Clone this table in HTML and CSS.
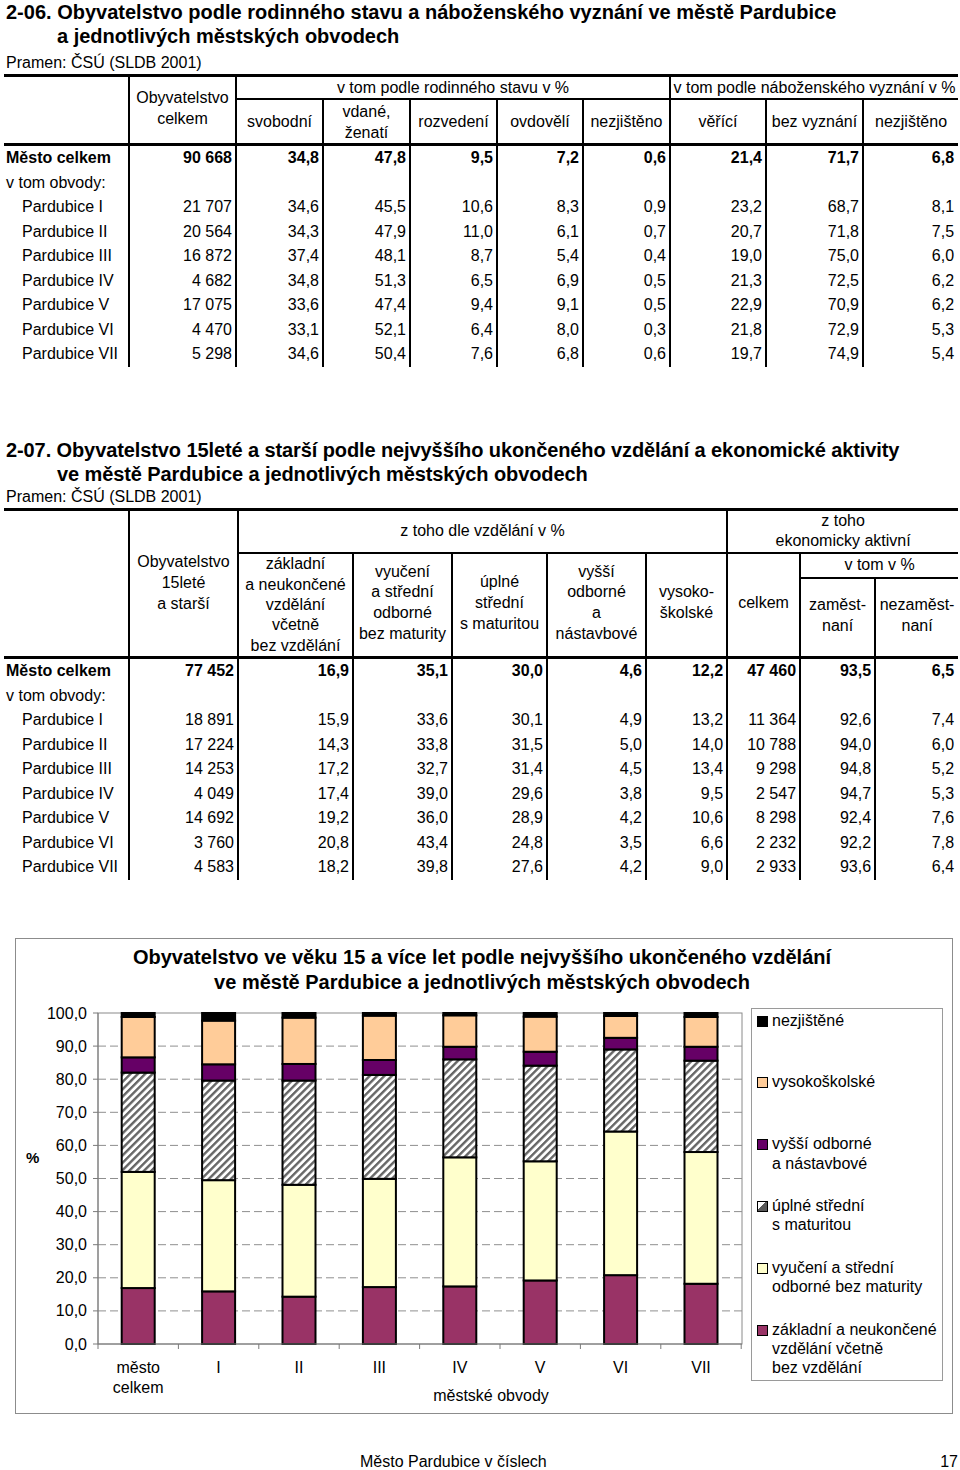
FILE: index.html
```html
<!DOCTYPE html>
<html lang="cs">
<head>
<meta charset="utf-8">
<title>Město Pardubice v číslech</title>
<link rel="stylesheet" href="styles.css">
</head>
<body>
<div class="page">

<section class="sec sec1">
  <h1 class="title">2-06. Obyvatelstvo podle rodinného stavu a náboženského vyznání ve městě Pardubice<br>a jednotlivých městských obvodech</h1>
  <p class="src">Pramen: ČSÚ (SLDB 2001)</p>
  <table class="t t1">
    <colgroup><col><col><col><col><col><col><col><col><col><col></colgroup>
    <thead>
      <tr class="r23">
        <th rowspan="2" class="bb3"></th>
        <th rowspan="2" class="vl bb3 lift">Obyvatelstvo<br>celkem</th>
        <th colspan="5" class="vl bb2">v tom podle rodinného stavu v %</th>
        <th colspan="3" class="vl bb2">v tom podle náboženského vyznání v %</th>
      </tr>
      <tr class="r46">
        <th class="vl bb3">svobodní</th>
        <th class="vl bb3">vdané,<br>ženatí</th>
        <th class="vl bb3">rozvedení</th>
        <th class="vl bb3">ovdovělí</th>
        <th class="vl bb3">nezjištěno</th>
        <th class="vl bb3">věřící</th>
        <th class="vl bb3">bez vyznání</th>
        <th class="vl bb3">nezjištěno</th>
      </tr>
    </thead>
    <tbody>
      <tr class="tot"><td>Město celkem</td><td>90&nbsp;668</td><td>34,8</td><td>47,8</td><td>9,5</td><td>7,2</td><td>0,6</td><td>21,4</td><td>71,7</td><td>6,8</td></tr>
      <tr><td>v tom obvody:</td><td></td><td></td><td></td><td></td><td></td><td></td><td></td><td></td><td></td></tr>
      <tr><td class="ind">Pardubice I</td><td>21&nbsp;707</td><td>34,6</td><td>45,5</td><td>10,6</td><td>8,3</td><td>0,9</td><td>23,2</td><td>68,7</td><td>8,1</td></tr>
      <tr><td class="ind">Pardubice II</td><td>20&nbsp;564</td><td>34,3</td><td>47,9</td><td>11,0</td><td>6,1</td><td>0,7</td><td>20,7</td><td>71,8</td><td>7,5</td></tr>
      <tr><td class="ind">Pardubice III</td><td>16&nbsp;872</td><td>37,4</td><td>48,1</td><td>8,7</td><td>5,4</td><td>0,4</td><td>19,0</td><td>75,0</td><td>6,0</td></tr>
      <tr><td class="ind">Pardubice IV</td><td>4&nbsp;682</td><td>34,8</td><td>51,3</td><td>6,5</td><td>6,9</td><td>0,5</td><td>21,3</td><td>72,5</td><td>6,2</td></tr>
      <tr><td class="ind">Pardubice V</td><td>17&nbsp;075</td><td>33,6</td><td>47,4</td><td>9,4</td><td>9,1</td><td>0,5</td><td>22,9</td><td>70,9</td><td>6,2</td></tr>
      <tr><td class="ind">Pardubice VI</td><td>4&nbsp;470</td><td>33,1</td><td>52,1</td><td>6,4</td><td>8,0</td><td>0,3</td><td>21,8</td><td>72,9</td><td>5,3</td></tr>
      <tr><td class="ind">Pardubice VII</td><td>5&nbsp;298</td><td>34,6</td><td>50,4</td><td>7,6</td><td>6,8</td><td>0,6</td><td>19,7</td><td>74,9</td><td>5,4</td></tr>
    </tbody>
  </table>
</section>

<section class="sec sec2">
  <h1 class="title title2">2-07. Obyvatelstvo 15leté a starší podle nejvyššího ukončeného vzdělání a ekonomické aktivity<br>ve městě Pardubice a jednotlivých městských obvodech</h1>
  <p class="src src2">Pramen: ČSÚ (SLDB 2001)</p>
  <table class="t t2">
    <colgroup><col><col><col><col><col><col><col><col><col><col></colgroup>
    <thead>
      <tr class="r41">
        <th rowspan="3" class="bb3"></th>
        <th rowspan="3" class="vl bb3">Obyvatelstvo<br>15leté<br>a starší</th>
        <th colspan="5" class="vl bb2">z toho dle vzdělání v %</th>
        <th colspan="3" class="vl bb2">z toho<br>ekonomicky aktivní</th>
      </tr>
      <tr class="r25">
        <th rowspan="2" class="vl bb3 five">základní<br>a neukončené<br>vzdělání<br>včetně<br>bez vzdělání</th>
        <th rowspan="2" class="vl bb3 lift">vyučení<br>a střední<br>odborné<br>bez maturity</th>
        <th rowspan="2" class="vl bb3 lift">úplné<br>střední<br>s maturitou</th>
        <th rowspan="2" class="vl bb3 lift">vyšší<br>odborné<br>a<br>nástavbové</th>
        <th rowspan="2" class="vl bb3 lift">vysoko-<br>školské</th>
        <th rowspan="2" class="vl bb3 lift">celkem</th>
        <th colspan="2" class="vl bb2">v tom v %</th>
      </tr>
      <tr class="r80">
        <th class="vl bb3 lift">zaměst-<br>naní</th>
        <th class="vl bb3 lift">nezaměst-<br>naní</th>
      </tr>
    </thead>
    <tbody>
      <tr class="tot"><td>Město celkem</td><td>77&nbsp;452</td><td>16,9</td><td>35,1</td><td>30,0</td><td>4,6</td><td>12,2</td><td>47&nbsp;460</td><td>93,5</td><td>6,5</td></tr>
      <tr><td>v tom obvody:</td><td></td><td></td><td></td><td></td><td></td><td></td><td></td><td></td><td></td></tr>
      <tr><td class="ind">Pardubice I</td><td>18&nbsp;891</td><td>15,9</td><td>33,6</td><td>30,1</td><td>4,9</td><td>13,2</td><td>11&nbsp;364</td><td>92,6</td><td>7,4</td></tr>
      <tr><td class="ind">Pardubice II</td><td>17&nbsp;224</td><td>14,3</td><td>33,8</td><td>31,5</td><td>5,0</td><td>14,0</td><td>10&nbsp;788</td><td>94,0</td><td>6,0</td></tr>
      <tr><td class="ind">Pardubice III</td><td>14&nbsp;253</td><td>17,2</td><td>32,7</td><td>31,4</td><td>4,5</td><td>13,4</td><td>9&nbsp;298</td><td>94,8</td><td>5,2</td></tr>
      <tr><td class="ind">Pardubice IV</td><td>4&nbsp;049</td><td>17,4</td><td>39,0</td><td>29,6</td><td>3,8</td><td>9,5</td><td>2&nbsp;547</td><td>94,7</td><td>5,3</td></tr>
      <tr><td class="ind">Pardubice V</td><td>14&nbsp;692</td><td>19,2</td><td>36,0</td><td>28,9</td><td>4,2</td><td>10,6</td><td>8&nbsp;298</td><td>92,4</td><td>7,6</td></tr>
      <tr><td class="ind">Pardubice VI</td><td>3&nbsp;760</td><td>20,8</td><td>43,4</td><td>24,8</td><td>3,5</td><td>6,6</td><td>2&nbsp;232</td><td>92,2</td><td>7,8</td></tr>
      <tr><td class="ind">Pardubice VII</td><td>4&nbsp;583</td><td>18,2</td><td>39,8</td><td>27,6</td><td>4,2</td><td>9,0</td><td>2&nbsp;933</td><td>93,6</td><td>6,4</td></tr>
    </tbody>
  </table>
</section>

<div class="chart">
  <div class="chart-title">Obyvatelstvo ve věku 15 a více let podle nejvyššího ukončeného vzdělání<br>ve městě Pardubice a jednotlivých městských obvodech</div>
  <div class="chart-body">
    <svg class="plot" width="735" height="415" viewBox="16 995 735 415" xmlns="http://www.w3.org/2000/svg">
      <defs>
        <pattern id="hatch" width="5.2" height="5.2" patternUnits="userSpaceOnUse" patternTransform="rotate(45)">
          <rect width="5.2" height="5.2" fill="#ffffff"/>
          <rect width="2.4" height="5.2" fill="#666666"/>
        </pattern>
      </defs>
      <rect class="frame" x="98" y="1013" width="644" height="331"/>
      <g class="grid">
        <line x1="98" x2="742" y1="1310.9" y2="1310.9"/>
        <line x1="98" x2="742" y1="1277.8" y2="1277.8"/>
        <line x1="98" x2="742" y1="1244.7" y2="1244.7"/>
        <line x1="98" x2="742" y1="1211.6" y2="1211.6"/>
        <line x1="98" x2="742" y1="1178.5" y2="1178.5"/>
        <line x1="98" x2="742" y1="1145.4" y2="1145.4"/>
        <line x1="98" x2="742" y1="1112.3" y2="1112.3"/>
        <line x1="98" x2="742" y1="1079.2" y2="1079.2"/>
        <line x1="98" x2="742" y1="1046.1" y2="1046.1"/>
      </g>
      <g class="bar" transform="translate(121.7 0)">
        <rect class="s1" width="33" y="1288.06" height="55.94"/>
        <rect class="s2" width="33" y="1171.88" height="116.18"/>
        <rect class="s3" width="33" y="1072.58" height="99.30"/>
        <rect class="s4" width="33" y="1057.35" height="15.23"/>
        <rect class="s5" width="33" y="1016.97" height="40.38"/>
        <rect class="s6" width="33" y="1013" height="3.97"/>
      </g>
      <g class="bar" transform="translate(202.1 0)">
        <rect class="s1" width="33" y="1291.37" height="52.63"/>
        <rect class="s2" width="33" y="1180.16" height="111.21"/>
        <rect class="s3" width="33" y="1080.52" height="99.64"/>
        <rect class="s4" width="33" y="1064.31" height="16.21"/>
        <rect class="s5" width="33" y="1020.61" height="43.70"/>
        <rect class="s6" width="33" y="1013" height="7.61"/>
      </g>
      <g class="bar" transform="translate(282.5 0)">
        <rect class="s1" width="33" y="1296.67" height="47.33"/>
        <rect class="s2" width="33" y="1184.79" height="111.88"/>
        <rect class="s3" width="33" y="1080.52" height="104.27"/>
        <rect class="s4" width="33" y="1063.97" height="16.55"/>
        <rect class="s5" width="33" y="1017.63" height="46.34"/>
        <rect class="s6" width="33" y="1013" height="4.63"/>
      </g>
      <g class="bar" transform="translate(362.9 0)">
        <rect class="s1" width="33" y="1287.07" height="56.93"/>
        <rect class="s2" width="33" y="1178.83" height="108.24"/>
        <rect class="s3" width="33" y="1074.90" height="103.93"/>
        <rect class="s4" width="33" y="1060.00" height="14.90"/>
        <rect class="s5" width="33" y="1015.65" height="44.35"/>
        <rect class="s6" width="33" y="1013" height="2.65"/>
      </g>
      <g class="bar" transform="translate(443.3 0)">
        <rect class="s1" width="33" y="1286.41" height="57.59"/>
        <rect class="s2" width="33" y="1157.32" height="129.09"/>
        <rect class="s3" width="33" y="1059.34" height="97.98"/>
        <rect class="s4" width="33" y="1046.76" height="12.58"/>
        <rect class="s5" width="33" y="1015.32" height="31.44"/>
        <rect class="s6" width="33" y="1013" height="2.32"/>
      </g>
      <g class="bar" transform="translate(523.7 0)">
        <rect class="s1" width="33" y="1280.45" height="63.55"/>
        <rect class="s2" width="33" y="1161.29" height="119.16"/>
        <rect class="s3" width="33" y="1065.63" height="95.66"/>
        <rect class="s4" width="33" y="1051.73" height="13.90"/>
        <rect class="s5" width="33" y="1016.64" height="35.09"/>
        <rect class="s6" width="33" y="1013" height="3.64"/>
      </g>
      <g class="bar" transform="translate(604.1 0)">
        <rect class="s1" width="33" y="1275.15" height="68.85"/>
        <rect class="s2" width="33" y="1131.50" height="143.65"/>
        <rect class="s3" width="33" y="1049.41" height="82.09"/>
        <rect class="s4" width="33" y="1037.83" height="11.58"/>
        <rect class="s5" width="33" y="1015.98" height="21.85"/>
        <rect class="s6" width="33" y="1013" height="2.98"/>
      </g>
      <g class="bar" transform="translate(684.5 0)">
        <rect class="s1" width="33" y="1283.76" height="60.24"/>
        <rect class="s2" width="33" y="1152.02" height="131.74"/>
        <rect class="s3" width="33" y="1060.66" height="91.36"/>
        <rect class="s4" width="33" y="1046.76" height="13.90"/>
        <rect class="s5" width="33" y="1016.97" height="29.79"/>
        <rect class="s6" width="33" y="1013" height="3.97"/>
      </g>
      <g class="axis">
        <line x1="98" x2="98" y1="1013" y2="1349"/>
        <line x1="93" x2="742" y1="1344" y2="1344"/>
        <line x1="93" x2="98" y1="1013" y2="1013"/>
        <line x1="93" x2="98" y1="1046.1" y2="1046.1"/>
        <line x1="93" x2="98" y1="1079.2" y2="1079.2"/>
        <line x1="93" x2="98" y1="1112.3" y2="1112.3"/>
        <line x1="93" x2="98" y1="1145.4" y2="1145.4"/>
        <line x1="93" x2="98" y1="1178.5" y2="1178.5"/>
        <line x1="93" x2="98" y1="1211.6" y2="1211.6"/>
        <line x1="93" x2="98" y1="1244.7" y2="1244.7"/>
        <line x1="93" x2="98" y1="1277.8" y2="1277.8"/>
        <line x1="93" x2="98" y1="1310.9" y2="1310.9"/>
        <line x1="178.4" x2="178.4" y1="1344" y2="1349"/>
        <line x1="258.8" x2="258.8" y1="1344" y2="1349"/>
        <line x1="339.2" x2="339.2" y1="1344" y2="1349"/>
        <line x1="419.6" x2="419.6" y1="1344" y2="1349"/>
        <line x1="500" x2="500" y1="1344" y2="1349"/>
        <line x1="580.4" x2="580.4" y1="1344" y2="1349"/>
        <line x1="660.8" x2="660.8" y1="1344" y2="1349"/>
        <line x1="741.2" x2="741.2" y1="1344" y2="1349"/>
      </g>
      <g class="ylab">
        <text x="87" y="1018.5">100,0</text>
        <text x="87" y="1051.6">90,0</text>
        <text x="87" y="1084.7">80,0</text>
        <text x="87" y="1117.8">70,0</text>
        <text x="87" y="1150.9">60,0</text>
        <text x="87" y="1184">50,0</text>
        <text x="87" y="1217.1">40,0</text>
        <text x="87" y="1250.2">30,0</text>
        <text x="87" y="1283.3">20,0</text>
        <text x="87" y="1316.4">10,0</text>
        <text x="87" y="1349.5">0,0</text>
      </g>
      <text class="pct" x="26" y="1163">%</text>
      <g class="xlab">
        <text x="138.2" y="1373">město</text>
        <text x="138.2" y="1393">celkem</text>
        <text x="218.6" y="1373">I</text>
        <text x="299" y="1373">II</text>
        <text x="379.4" y="1373">III</text>
        <text x="459.8" y="1373">IV</text>
        <text x="540.2" y="1373">V</text>
        <text x="620.6" y="1373">VI</text>
        <text x="701" y="1373">VII</text>
        <text x="491" y="1401">městské obvody</text>
      </g>
    </svg>
    <ul class="legend">
      <li><span class="mk m6"></span><span>nezjištěné</span></li>
      <li><span class="mk m5"></span><span>vysokoškolské</span></li>
      <li><span class="mk m4"></span><span>vyšší odborné<br>a nástavbové</span></li>
      <li><span class="mk m3"></span><span>úplné střední<br>s maturitou</span></li>
      <li><span class="mk m2"></span><span>vyučení a střední<br>odborné bez maturity</span></li>
      <li><span class="mk m1"></span><span>základní a neukončené<br>vzdělání včetně<br>bez vzdělání</span></li>
    </ul>
  </div>
</div>

<footer class="foot">
  <span>Město Pardubice v číslech</span>
  <span class="pg">17</span>
</footer>

</div>
</body>
</html>
```

FILE: styles.css
```css
html, body {
  margin: 0;
  padding: 0;
  background: #ffffff;
}

body {
  font-family: "Liberation Sans", Arial, sans-serif;
  color: #000000;
  font-size: 16px;
}

.page {
  width: 960px;
  padding-left: 4px;
  box-sizing: border-box;
}

.title {
  margin: 0 0 0 2px;
  font-size: 20px;
  font-weight: bold;
  line-height: 24px;
  padding-left: 51px;
  text-indent: -51px;
  white-space: nowrap;
}

.title2 {
  letter-spacing: -0.1px;
}

.src {
  margin: 5px 0 1px 2px;
  font-size: 16px;
  line-height: 20px;
}

.src2 {
  margin-top: 1px;
  margin-bottom: 1px;
}

.sec2 {
  margin-top: 71px;
}

/* tables */
.t {
  border-collapse: separate;
  border-spacing: 0;
  table-layout: fixed;
  width: 954px;
  border-top: 3px solid #000;
  font-size: 16px;
}

.t th,
.t td {
  padding: 0;
  white-space: nowrap;
}

.t th {
  font-weight: normal;
  text-align: center;
  vertical-align: middle;
  line-height: 21px;
}

.t .vl { border-left: 2px solid #000; }
.t .bb2 { border-bottom: 2px solid #000; }
.t .bb3 { border-bottom: 3px solid #000; }
.t th.lift { padding-bottom: 4px; }

.t td {
  line-height: 18px;
  text-align: right;
  padding-right: 3px;
  vertical-align: middle;
}

.t td + td { border-left: 2px solid #000; }
.t td:last-child { padding-right: 4px; }

.t td:first-child {
  text-align: left;
  padding-left: 2px;
  padding-right: 0;
}

.t td.ind { padding-left: 18px; }

.t tbody tr { height: 24.5px; }
.t tr.tot td { font-weight: bold; }

.t .r23 { height: 23px; }
.t .r46 { height: 46px; }
.t .r41 { height: 41px; }
.t .r25 { height: 25px; }
.t .r80 { height: 80px; }

.t2 th { line-height: 20.8px; }
.t2 th.five { line-height: 20.4px; }

.t1 col:nth-child(1) { width: 124px; }
.t1 col:nth-child(2) { width: 107px; }
.t1 col:nth-child(3) { width: 87px; }
.t1 col:nth-child(4) { width: 87px; }
.t1 col:nth-child(5) { width: 87px; }
.t1 col:nth-child(6) { width: 86px; }
.t1 col:nth-child(7) { width: 87px; }
.t1 col:nth-child(8) { width: 96px; }
.t1 col:nth-child(9) { width: 97px; }
.t1 col:nth-child(10) { width: 96px; }

.t2 col:nth-child(1) { width: 124px; }
.t2 col:nth-child(2) { width: 109px; }
.t2 col:nth-child(3) { width: 115px; }
.t2 col:nth-child(4) { width: 99px; }
.t2 col:nth-child(5) { width: 95px; }
.t2 col:nth-child(6) { width: 99px; }
.t2 col:nth-child(7) { width: 81px; }
.t2 col:nth-child(8) { width: 73px; }
.t2 col:nth-child(9) { width: 75px; }
.t2 col:nth-child(10) { width: 84px; }

/* chart */
.chart {
  margin: 58px 0 0 11px;
  width: 938px;
  height: 476px;
  box-sizing: border-box;
  border: 1px solid #8c8c8c;
  padding-top: 6px;
}

.chart-title {
  font-size: 20px;
  font-weight: bold;
  line-height: 25px;
  text-align: center;
  padding-right: 4px;
  white-space: nowrap;
}

.chart-body {
  display: flex;
  align-items: flex-start;
}

.plot {
  display: block;
  flex: none;
}

.plot .frame {
  fill: none;
  stroke: #8a8a8a;
  stroke-width: 1;
}

.plot .grid line {
  stroke: #8f8f8f;
  stroke-width: 1;
  stroke-dasharray: 8 4;
}

.plot .axis line {
  stroke: #7a7a7a;
  stroke-width: 1;
}

.plot .bar rect {
  stroke: #000;
  stroke-width: 2;
}

.plot .s1 { fill: #993366; }
.plot .s2 { fill: #ffffcc; }
.plot .s3 { fill: url(#hatch); }
.plot .s4 { fill: #660066; }
.plot .s5 { fill: #ffcc99; }
.plot .s6 { fill: #000000; }

.plot text {
  font-family: "Liberation Sans", Arial, sans-serif;
  font-size: 16px;
  fill: #000;
}

.plot .ylab text { text-anchor: end; }
.plot .xlab text { text-anchor: middle; }
.plot .pct { font-weight: bold; font-size: 15px; }

.legend {
  list-style: none;
  margin: 13px 0 0 0;
  padding: 2px 0 0 5px;
  width: 192px;
  height: 373px;
  box-sizing: border-box;
  border: 1px solid #9a9a9a;
  font-size: 16px;
  line-height: 19.3px;
}

.legend li {
  display: flex;
  align-items: flex-start;
  height: 61.8px;
  white-space: nowrap;
}

.legend li:last-child { height: auto; }

.mk {
  flex: none;
  width: 9px;
  height: 9px;
  border: 1px solid #000;
  margin: 5px 4px 0 0;
}

.m1 { background: #993366; }
.m2 { background: #ffffcc; }
.m3 { background: linear-gradient(135deg, #ffffff 40%, #5a5a5a 40%); }
.m4 { background: #660066; }
.m5 { background: #ffcc99; }
.m6 { background: #000000; }

/* footer */
.foot {
  display: flex;
  margin-top: 38px;
  padding-left: 356px;
  padding-right: 2px;
  font-size: 16px;
  line-height: 19px;
}

.foot .pg { margin-left: auto; }
```
